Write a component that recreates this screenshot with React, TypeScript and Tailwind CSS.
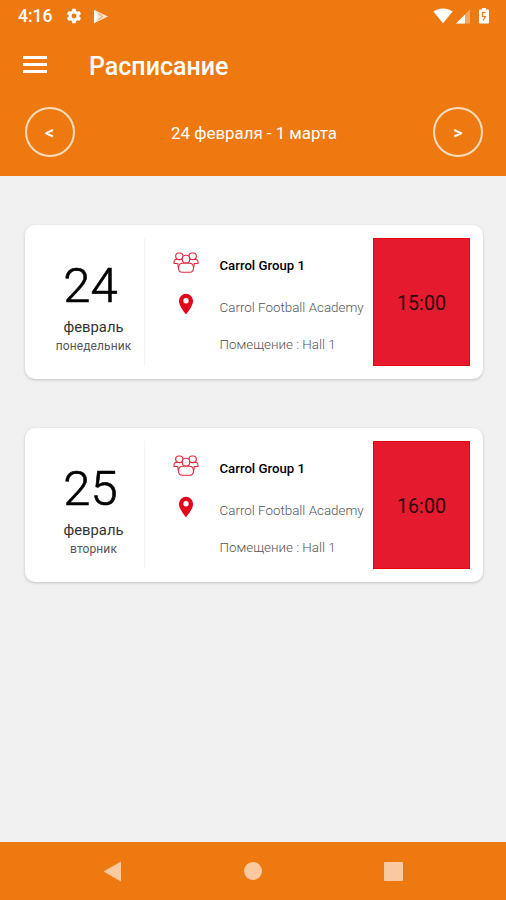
import React from 'react';

interface Lesson {
  day: string;
  month: string;
  weekday: string;
  group: string;
  place: string;
  room: string;
  time: string;
}

const lessons: Lesson[] = [
  {
    day: '24',
    month: 'февраль',
    weekday: 'понедельник',
    group: 'Carrol Group 1',
    place: 'Carrol Football Academy',
    room: 'Помещение : Hall 1',
    time: '15:00',
  },
  {
    day: '25',
    month: 'февраль',
    weekday: 'вторник',
    group: 'Carrol Group 1',
    place: 'Carrol Football Academy',
    room: 'Помещение : Hall 1',
    time: '16:00',
  },
];

const GearIcon = () => (
  <svg width="18" height="18" viewBox="0 0 24 24" fill="currentColor">
    <path d="M19.14 12.94c.04-.3.06-.61.06-.94s-.02-.64-.07-.94l2.03-1.58a.49.49 0 0 0 .12-.61l-1.92-3.32a.49.49 0 0 0-.59-.22l-2.39.96a7.03 7.03 0 0 0-1.62-.94l-.36-2.54a.48.48 0 0 0-.48-.41h-3.84a.47.47 0 0 0-.47.41l-.36 2.54c-.59.24-1.13.57-1.62.94l-2.39-.96a.48.48 0 0 0-.59.22L2.74 8.87a.47.47 0 0 0 .12.61l2.03 1.58c-.05.3-.09.63-.09.94s.02.64.07.94l-2.03 1.58a.49.49 0 0 0-.12.61l1.92 3.32c.12.22.37.29.59.22l2.39-.96c.5.38 1.03.7 1.62.94l.36 2.54c.05.24.24.41.48.41h3.84c.24 0 .44-.17.47-.41l.36-2.54c.59-.24 1.13-.56 1.62-.94l2.39.96c.22.08.47 0 .59-.22l1.92-3.32a.47.47 0 0 0-.12-.61zM12 15.3a3.3 3.3 0 1 1 0-6.6 3.3 3.3 0 0 1 0 6.6z" />
  </svg>
);

const PlayStoreIcon = () => (
  <svg width="16" height="15" viewBox="0 0 16 15" fill="currentColor">
    <path d="M1 14.2V.8l14 6.7z" opacity=".8" />
    <path d="M1 .8 5 7.5 1 14.2z" />
    <path d="M5.5 4.5 9.5 7.5 5.5 10.5" fill="none" stroke="#ee7910" strokeWidth=".7" />
  </svg>
);

const WifiIcon = () => (
  <svg width="20" height="16" viewBox="0 0 20 16" fill="currentColor">
    <path d="M10 15.2.4 3.6C3.2 1.6 6.5.6 10 .6s6.8 1 9.6 3z" />
  </svg>
);

const SignalIcon = () => (
  <svg width="16" height="16" viewBox="0 0 16 16" fill="currentColor">
    <path d="M1 15.5 15 1.5v14z" opacity=".35" />
    <path d="M1 15.5 10 6.5v9z" />
  </svg>
);

const BatteryIcon = () => (
  <svg width="12" height="18" viewBox="0 0 12 18" fill="currentColor">
    <path d="M4 1h4v1.5h2.2c.5 0 .8.4.8.8v12.4c0 .5-.3.8-.8.8H1.8c-.5 0-.8-.3-.8-.8V3.3c0-.4.3-.8.8-.8H4z" />
    <path d="M7.6 5.5H4.5v4h3L5 13.5" fill="none" stroke="#ee7910" strokeWidth="1.1" />
  </svg>
);

const GroupIcon = () => (
  <svg width="26" height="21" viewBox="0 0 26 21" fill="none" stroke="#e3283a" strokeWidth="1.1">
    <path d="M7.2 15.3H5.2L4.7 11.5H1V10.2C1 8.4 2.4 7.3 4.5 7.3h4.3" />
    <path d="M18.8 15.3h2l.5-3.800H25v-1.300c0-1.800-1.400-2.900-3.500-2.900h-4.300" />
    <rect x="2.7" y="1" width="7.3" height="6.6" rx="3" fill="#fff" />
    <rect x="16" y="1" width="7.3" height="6.6" rx="3" fill="#fff" />
    <rect x="9.3" y="3.2" width="7.4" height="7.8" rx="3.4" fill="#fff" />
    <path d="M9.7 11.2h6.6c2.700 0 4.200 1.800 4.200 4.800 0 2.900-1.200 4.200-3.700 4.200H9.200c-2.500 0-3.700-1.300-3.700-4.200 0-3 1.500-4.800 4.200-4.800z" fill="#fff" />
  </svg>
);

const PinIcon = () => (
  <svg width="16" height="22" viewBox="0 0 16 22" fill="#e2061c">
    <path fillRule="evenodd" d="M8 .8A7.1 7.1 0 0 0 .9 7.9C.9 13.2 8 21.2 8 21.2s7.1-8 7.1-13.3A7.1 7.1 0 0 0 8 .8zm0 9.7a2.7 2.7 0 1 1 0-5.4 2.7 2.7 0 0 1 0 5.4z" />
  </svg>
);

const LessonCard = ({ lesson }: { lesson: Lesson }) => (
  <div className="flex h-[154px] rounded-[10px] bg-white py-[13px] pr-[13px] shadow-[0_1px_3px_rgba(0,0,0,0.2)]">
    <div className="flex w-[120px] shrink-0 flex-col items-center border-r border-[#f4f4f4] pl-[18px] text-center">
      <span className="mt-[22px] mr-[6px] h-[52px] text-[49px] leading-[52px] font-light text-black [-webkit-text-stroke:0.6px_black]">{lesson.day}</span>
      <span className="mt-[5px] h-[20px] text-[14.8px] leading-[20px] text-[#333]">{lesson.month}</span>
      <span className="mt-px h-[16px] text-[12px] leading-[16px] tracking-[0.1px] whitespace-nowrap text-[#555]">{lesson.weekday}</span>
    </div>
    <div className="flex w-[74px] shrink-0 flex-col items-center pl-[8px]">
      <div className="mt-[14px] h-[21px]">
        <GroupIcon />
      </div>
      <div className="mt-[20px] h-[22px]">
        <PinIcon />
      </div>
    </div>
    <div className="flex flex-1 flex-col pl-[0.5px] whitespace-nowrap">
      <span className="mt-[18px] h-[20px] text-[13.2px] leading-[20px] font-medium text-black">{lesson.group}</span>
      <span className="mt-[22px] h-[20px] text-[13.4px] leading-[20px] font-light text-[#555]">{lesson.place}</span>
      <span className="mt-[17px] h-[20px] text-[13.4px] leading-[20px] font-light text-[#555]">{lesson.room}</span>
    </div>
    <div className="flex w-[97px] shrink-0 items-center justify-center border border-[#e3060f] bg-[#e61a2e] pt-[3px] text-[19.7px] text-[#2b080c]">
      {lesson.time}
    </div>
  </div>
);

const App = () => {
  return (
    <div className="flex h-[900px] w-[506px] flex-col overflow-hidden bg-[#f0f0f0] font-['Roboto','Noto_Sans',sans-serif]">
      <header className="h-[176px] shrink-0 bg-[#ee7910] text-white">
        <div className="flex h-[32px] items-center pr-[16px] pl-[18px]">
          <span className="w-[47px] text-[17.5px] leading-[32px] font-medium">4:16</span>
          <GearIcon />
          <div className="ml-[10px]">
            <PlayStoreIcon />
          </div>
          <div className="ml-auto flex items-center">
            <WifiIcon />
            <div className="ml-[2px]">
              <SignalIcon />
            </div>
            <div className="ml-[7px]">
              <BatteryIcon />
            </div>
          </div>
        </div>
        <div className="flex h-[66px] items-center pl-[23px]">
          <button className="-mt-[2px] flex w-[24px] flex-col gap-[4px]">
            <span className="h-[3px] bg-white" />
            <span className="h-[3px] bg-white" />
            <span className="h-[3px] bg-white" />
          </button>
          <h1 className="ml-[42px] pt-[3px] text-[25px] leading-[30px] font-medium">Расписание</h1>
        </div>
        <div className="flex h-[68px] items-center justify-between pr-[23px] pl-[25px]">
          <button className="flex size-[50px] items-center justify-center rounded-full border-2 border-[#fddcbf] pr-px text-[18px] font-medium">
            &lt;
          </button>
          <span className="pt-[3px] text-[16.9px] tracking-[-0.02px]">24 февраля - 1 марта</span>
          <button className="flex size-[50px] items-center justify-center rounded-full border-2 border-[#fddcbf] text-[18px] font-medium">
            &gt;
          </button>
        </div>
      </header>

      <main className="flex flex-1 flex-col gap-[49px] pt-[49px] pr-[23px] pl-[25px]">
        {lessons.map((lesson) => (
          <LessonCard key={lesson.day} lesson={lesson} />
        ))}
      </main>

      <nav className="flex h-[58px] shrink-0 items-center justify-between bg-[#ee7910] pr-[103px] pl-[103px] text-[#fac9a0]">
        <svg width="19" height="21" viewBox="0 0 19 21" fill="currentColor">
          <path d="M.5 10.5 18 .5v20z" />
        </svg>
        <span className="size-[18px] rounded-full bg-current" />
        <span className="size-[19px] rounded-[1px] bg-current" />
      </nav>
    </div>
  );
};

export default App;
